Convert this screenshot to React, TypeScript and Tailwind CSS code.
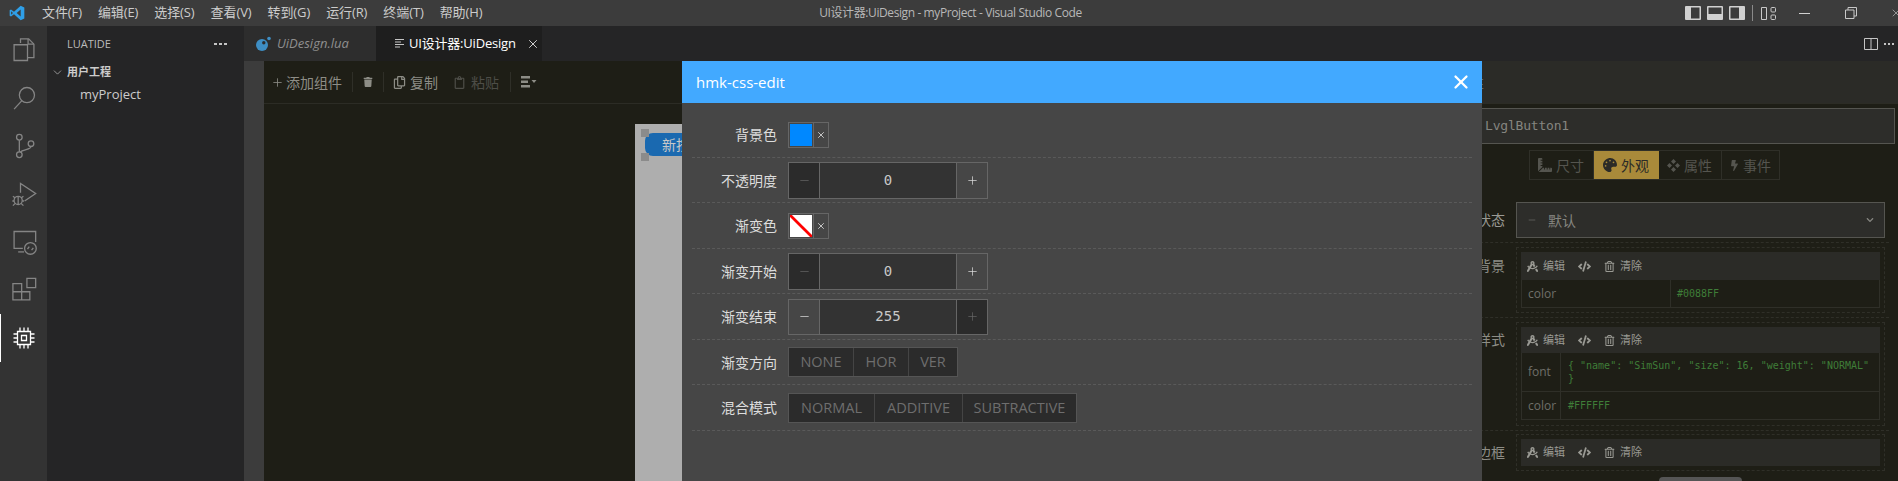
import React from "react";
import { FaDraftingCompass, FaCode, FaRegTrashAlt, FaPalette, FaRulerCombined, FaBolt, FaTrash, FaRegCopy, FaRegClipboard, FaChevronDown } from "react-icons/fa";
import { X, Plus, Minus, ChevronDown } from "lucide-react";

const Ico = ({ d, children }: { d?: string; children?: React.ReactNode }) => (
  <svg width="28" height="28" viewBox="0 0 24 24" fill="none" stroke="#858585" strokeWidth="1.1">
    {d ? <path d={d} /> : null}
    {children}
  </svg>
);

function ActivityBar() {
  return (
    <div className="flex h-full w-[47px] shrink-0 flex-col bg-[#333333]">
      <div className="flex h-12 items-center justify-center">
        <Ico><path d="M9 6V2.5h7l4.5 4.5v11.5H15" /><path d="M15.5 2.5V7h5" /><path d="M3.5 7.5H15v13.5H3.5z" /></Ico>
      </div>
      <div className="flex h-12 items-center justify-center">
        <Ico><circle cx="14.5" cy="9.5" r="6.5" /><path d="M10 14.5 3.5 21.5" /></Ico>
      </div>
      <div className="flex h-12 items-center justify-center">
        <Ico><circle cx="8" cy="4.5" r="2.4" /><circle cx="8" cy="19.5" r="2.4" /><circle cx="18" cy="10" r="2.4" /><path d="M8 7v10M18 12.5c0 3-7 2-9.5 5" /></Ico>
      </div>
      <div className="flex h-12 items-center justify-center">
        <Ico><path d="M9 11V3l13 8.5-9.5 6.5" /><circle cx="7" cy="17.5" r="3.5" /><path d="M7 14v7M2.5 14l2 1.5M11.5 14l-2 1.5M2 18h1.5M10.500 18H12M2.500 22l2-2M11.500 22l-2-2" /></Ico>
      </div>
      <div className="flex h-12 items-center justify-center">
        <Ico><path d="M11 17.500H3.500V3H22v9" /><path d="M7 20.500h5" /><circle cx="17.500" cy="17.500" r="5" /><path d="m15 18 1.500-2M18.500 19l1.500-2" /></Ico>
      </div>
      <div className="flex h-12 items-center justify-center">
        <Ico><path d="M2.500 6.500h7.500v14H2.500zM2.500 13.500H17v7h-7" /><path d="M14.500 2H22v8h-7.500z" /></Ico>
      </div>
      <div className="relative flex h-12 items-center justify-center">
        <div className="absolute left-0 top-0 h-12 w-px bg-white" />
        <svg width="24" height="24" viewBox="0 0 24 24" fill="none" stroke="#ffffff" strokeWidth="1.3">
          <path d="M5.500 5.500h13v13h-13z" />
          <path d="M9.500 9.500h5v5h-5z" />
          <path d="M8 1.500v4M12 1.500v4M16 1.500v4M8 18.500v4M12 18.500v4M16 18.500v4M1.500 8h4M1.500 12h4M1.500 16h4M18.500 8h4M18.500 12h4M18.500 16h4" />
        </svg>
      </div>
    </div>
  );
}

function Sidebar() {
  return (
    <div className="h-full w-[197px] shrink-0 bg-[#252526] text-[#cccccc]">
      <div className="flex h-[35px] items-center justify-between pl-5 pr-[17px] text-[11px] leading-none text-[#bbbbbb]">
        <span>LUATIDE</span>
        <span className="flex gap-[2px]">
          <i className="h-[2px] w-[3px] bg-[#c5c5c5]" />
          <i className="h-[2px] w-[3px] bg-[#c5c5c5]" />
          <i className="h-[2px] w-[3px] bg-[#c5c5c5]" />
        </span>
      </div>
      <div className="flex h-[22px] items-center pl-[4px] text-[11px] font-bold">
        <ChevronDown size={13} strokeWidth={1.2} className="mr-[3px]" />
        <span>用户工程</span>
      </div>
      <div className="flex h-[24px] items-center pl-[33px] text-[13px]">myProject</div>
    </div>
  );
}

function Tabs() {
  return (
    <div className="flex h-[35px] shrink-0 items-stretch bg-[#252526]">
      <div className="flex w-[132px] items-center bg-[#2d2d2d] pl-[11px] text-[13px] italic text-[#8f8f8f]">
        <svg width="16" height="16" viewBox="0 0 16 16" className="mr-[6px] shrink-0">
          <circle cx="7" cy="9" r="6" fill="#3e8ec4" />
          <circle cx="8.800" cy="6.800" r="1.700" fill="#2d2d2d" />
          <circle cx="14" cy="2.500" r="1.800" fill="#3e8ec4" />
        </svg>
        UiDesign.lua
      </div>
      <div className="flex w-[166px] items-center bg-[#1e1e1e] pl-[18px] text-[13px] tracking-[-0.2px] text-white">
        <svg width="11" height="11" viewBox="0 0 11 11" fill="none" stroke="#c5c5c5" strokeWidth="1.200" className="mr-[4px] shrink-0">
          <path d="M1 1.500h9M1 4h6M1 6.500h9M1 9h5" />
        </svg>
        <span className="whitespace-nowrap">UI设计器:UiDesign</span>
        <X size={14} strokeWidth={1.500} className="ml-[10px] shrink-0 text-[#e8e8e8]" />
      </div>
      <div className="flex flex-1 items-center justify-end">
        <svg width="14" height="14" viewBox="0 0 14 14" fill="none" stroke="#c5c5c5" strokeWidth="1" className="mr-[6px]">
          <path d="M.5 1.500h13v11H.5zM7 1.500v11" />
        </svg>
        <span className="flex w-[14px] gap-[2px]">
          <i className="h-[2px] w-[2px] shrink-0 bg-[#c5c5c5]" />
          <i className="h-[2px] w-[2px] shrink-0 bg-[#c5c5c5]" />
          <i className="h-[2px] w-[2px] shrink-0 bg-[#c5c5c5]" />
        </span>
      </div>
    </div>
  );
}

function Toolbar() {
  return (
    <div className="flex h-[43px] shrink-0 items-center border-b border-[#2c2c25] bg-[#1e1e16] pl-[7px] text-[14px] text-[#8d8d86]">
      <Plus size={13} strokeWidth={1.500} className="mr-[2px]" />
      <span className="mr-[10px] whitespace-nowrap">添加组件</span>
      <i className="h-5 w-px bg-[#2f2f28]" />
      <FaTrash size={10} className="mx-[10px] text-[#8d8d86]" />
      <i className="h-5 w-px bg-[#2f2f28]" />
      <FaRegCopy size={13} className="ml-[9px] mr-[4px]" />
      <span className="mr-[15px] whitespace-nowrap">复制</span>
      <FaRegClipboard size={13} className="mr-[5px] text-[#4d4d47]" />
      <span className="mr-[11px] whitespace-nowrap text-[#4d4d47]">粘贴</span>
      <i className="h-5 w-px bg-[#2f2f28]" />
      <svg width="16" height="14" viewBox="0 0 16 14" fill="#8d8d86" className="ml-[10px]">
        <path d="M0 1h9v2.500H0zM0 5.500h7V8H0zM0 10h9v2.500H0zM10.500 5h5L13 8z" />
      </svg>
    </div>
  );
}

function Canvas() {
  return (
    <div className="flex min-w-0 flex-1 flex-col bg-[#1e1e16]">
      <Toolbar />
      <div className="flex flex-1 pl-[371px] pt-[20px]">
        <div className="h-full w-[320px] bg-[#aeaeae] pl-[10px] pt-[9px]">
          <div className="relative flex h-[23px] w-[80px] items-center rounded-l-[8px] bg-[#1a69b0] pl-[17px] text-[14px] text-[#c8c8c8]">
            <i className="absolute -left-[4px] -top-[4px] h-2 w-2 bg-[#8b8b8b]" />
            <i className="absolute -left-[4px] -bottom-[5px] h-2 w-2 bg-[#8b8b8b]" />
            新按钮
          </div>
        </div>
      </div>
    </div>
  );
}

function StyleGroup({ label, children, headerClass }: { label: string; children?: React.ReactNode; headerClass: string }) {
  return (
    <div className="flex">
      <div className={`w-[95px] shrink-0 text-right text-[14px] leading-[26px] text-[#8d8d86] ${headerClass === "h-[26px]" ? "pt-[5px]" : "pt-[6px]"}`}>{label}</div>
      <div className="ml-[11px] w-[369px] border border-dashed border-[#2f2f28] p-[4px]">
        <div className={`flex items-center bg-[#2b2b27] pl-[6px] text-[11px] text-[#9a9a94] ${headerClass}`}>
          <FaDraftingCompass size={11} className="mr-[5px]" />
          <span className="mr-[13px] whitespace-nowrap">编辑</span>
          <FaCode size={13} className="mr-[13px]" />
          <FaRegTrashAlt size={11} className="mr-[5px]" />
          <span className="whitespace-nowrap">清除</span>
        </div>
        {children}
      </div>
    </div>
  );
}

function RightPanel() {
  return (
    <div className="h-full w-[488px] shrink-0 bg-[#1e1e16] text-[#8d8d86]">
      <div className="flex h-[43px] items-center border-b border-[#2c2c25] bg-[#2b2b27] pl-[46px] text-[14px] text-[#6f6f69]">属性</div>
      <div className="ml-[4px] mr-[3px] mt-[4px] flex h-[36px] items-center border border-[#555550] bg-[#2d2d2a] pl-[70px] font-['DejaVu_Sans_Mono',monospace] text-[13px] tracking-[-0.2px] text-[#858580]">
        LvglButton1
      </div>
      <div className="mt-[6px] flex justify-center">
        <div className="flex h-[30px] border border-[#2f2f28] text-[14px] text-[#55554f]">
          <div className="flex w-[64px] items-center justify-center gap-[4px] border-r border-[#2f2f28]"><FaRulerCombined size={14} />尺寸</div>
          <div className="flex w-[65px] items-center justify-center gap-[4px] bg-[#a98a3a] text-[#2b2b27]"><FaPalette size={14} />外观</div>
          <div className="flex w-[63px] items-center justify-center gap-[4px] border-r border-[#2f2f28]">
            <svg width="13" height="13" viewBox="0 0 13 13" fill="#55554f"><path d="M6.500 0 9 2.500 6.500 5 4 2.500zM2.500 4 5 6.500 2.500 9 0 6.500zM10.500 4 13 6.500 10.500 9 8 6.500zM6.500 8 9 10.500 6.500 13 4 10.500z" /></svg>
            属性
          </div>
          <div className="flex w-[57px] items-center justify-center gap-[3px]"><FaBolt size={11} />事件</div>
        </div>
      </div>
      <div className="mr-[9px] mt-[22px] flex border-b border-dashed border-[#2f2f28] pb-[4px]">
        <div className="w-[95px] shrink-0 text-right text-[14px] leading-[36px] text-[#9a9a94]">状态</div>
        <div className="ml-[11px] flex h-[36px] w-[369px] items-center border border-[#555550] bg-[#2d2d2a] pl-[10px] pr-[10px] text-[14px] text-[#858580]">
          <Minus size={10} strokeWidth={1.200} className="mr-[11px]" />
          <span className="flex-1">默认</span>
          <FaChevronDown size={8} />
        </div>
      </div>
      <div className="mr-[9px] border-b border-dashed border-[#2f2f28] pb-[4px] pt-[4px]">
        <StyleGroup label="背景" headerClass="h-[28px]">
          <div className="flex h-[28px] items-center border border-t-0 border-[#2f2f28] text-[12px]">
            <div className="flex h-full w-[149px] items-center border-r border-[#2f2f28] pl-[6px] text-[#6f6f69]">color</div>
            <div className="pl-[6px] font-['DejaVu_Sans_Mono',monospace] text-[10px] text-[#3f7d38]">#0088FF</div>
          </div>
        </StyleGroup>
      </div>
      <div className="mr-[9px] border-b border-dashed border-[#2f2f28] pb-[4px] pt-[4px]">
        <StyleGroup label="样式" headerClass="h-[26px]">
          <div className="flex h-[39px] border border-t-0 border-[#2f2f28] text-[12px]">
            <div className="flex h-full w-[39px] shrink-0 items-center border-r border-[#2f2f28] pl-[6px] text-[#6f6f69]">font</div>
            <div className="flex items-center pl-[7px] pr-[8px] font-['DejaVu_Sans_Mono',monospace] text-[10px] leading-[13px] text-[#3f7d38]">{'{ "name": "SimSun", "size": 16, "weight": "NORMAL" }'}</div>
          </div>
          <div className="mb-px flex h-[28px] border border-t-0 border-[#2f2f28] text-[12px]">
            <div className="flex h-full w-[39px] shrink-0 items-center border-r border-[#2f2f28] pl-[6px] text-[#6f6f69]">color</div>
            <div className="flex items-center pl-[7px] font-['DejaVu_Sans_Mono',monospace] text-[10px] text-[#3f7d38]">#FFFFFF</div>
          </div>
        </StyleGroup>
      </div>
      <div className="mr-[9px] pt-[3px]">
        <StyleGroup label="边框" headerClass="h-[27px]" />
      </div>
    </div>
  );
}

function ColorPick({ none }: { none?: boolean }) {
  return (
    <div className="flex h-[26px] w-[41px] border border-[#666666]">
      <div className="h-full w-[25px] border-r border-[#666666] p-px">
        {none ? (
          <svg viewBox="0 0 24 24" preserveAspectRatio="none" className="block h-full w-full bg-white">
            <path d="M0 0 24 24" stroke="#ff0000" strokeWidth="3" />
          </svg>
        ) : (
          <div className="h-full w-full bg-[#0088ff]" />
        )}
      </div>
      <div className="flex flex-1 items-center justify-center">
        <X size={10} strokeWidth={2} className="text-[#dddddd]" />
      </div>
    </div>
  );
}

function NumberBox({ value, minDisabled, maxDisabled, tall }: { value: string; minDisabled?: boolean; maxDisabled?: boolean; tall?: boolean }) {
  return (
    <div className={`flex w-[200px] border border-[#666666] ${tall ? "h-[37px]" : "h-[36px]"}`}>
      <div className={`flex w-[31px] items-center justify-center border-r border-[#666666] ${minDisabled ? "bg-[#2b2b2b] text-[#666666]" : "bg-[#464646] text-[#e0e0e0]"}`}>
        <Minus size={13} strokeWidth={1.300} />
      </div>
      <div className="flex flex-1 items-center justify-center bg-[#333333] font-['DejaVu_Sans_Mono',monospace] text-[14px] text-[#c8c8c8]">{value}</div>
      <div className={`flex w-[31px] items-center justify-center border-l border-[#666666] ${maxDisabled ? "bg-[#2b2b2b] text-[#666666]" : "bg-[#464646] text-[#e0e0e0]"}`}>
        <Plus size={13} strokeWidth={1.300} />
      </div>
    </div>
  );
}

function BtnGroup({ items }: { items: { t: string; w: string }[] }) {
  return (
    <div className="flex h-[30px] border border-[#555555] bg-[#2b2b2b] text-[14.5px] text-[#6e6e6e]">
      {items.map((it, i) => (
        <div key={it.t} className={`flex items-center justify-center ${it.w} ${i ? "border-l border-[#444444]" : ""}`}>{it.t}</div>
      ))}
    </div>
  );
}

function Row({ label, children }: { label: string; children: React.ReactNode }) {
  return (
    <div className="flex h-[45.5px] items-center border-b border-dashed border-[#5a5a5a] pt-px">
      <div className="mr-[11px] w-[85px] shrink-0 text-right text-[14px] text-[#dddddd]">{label}</div>
      {children}
    </div>
  );
}

function Modal() {
  return (
    <div className="absolute bottom-0 left-[682px] top-[61px] flex w-[800px] flex-col bg-[#464646]">
      <div className="flex h-[42px] shrink-0 items-center justify-between bg-[#42a9ff] pl-[14px] pr-[10px] text-[15px] text-white">
        <span>hmk-css-edit</span>
        <X size={22} strokeWidth={2.500} />
      </div>
      <div className="pl-[10px] pr-[10px] pt-[9px]">
        <Row label="背景色"><ColorPick /></Row>
        <Row label="不透明度"><NumberBox value="0" minDisabled tall /></Row>
        <Row label="渐变色"><ColorPick none /></Row>
        <Row label="渐变开始"><NumberBox value="0" minDisabled tall /></Row>
        <Row label="渐变结束"><NumberBox value="255" maxDisabled /></Row>
        <Row label="渐变方向">
          <BtnGroup items={[{ t: "NONE", w: "w-[64px]" }, { t: "HOR", w: "w-[55px]" }, { t: "VER", w: "w-[49px]" }]} />
        </Row>
        <Row label="混合模式">
          <BtnGroup items={[{ t: "NORMAL", w: "w-[85px]" }, { t: "ADDITIVE", w: "w-[88px]" }, { t: "SUBTRACTIVE", w: "w-[114px]" }]} />
        </Row>
      </div>
    </div>
  );
}

function TitleBar() {
  const menus = ["文件(F)", "编辑(E)", "选择(S)", "查看(V)", "转到(G)", "运行(R)", "终端(T)", "帮助(H)"];
  return (
    <div className="grid h-[26px] shrink-0 grid-cols-[1fr_auto_1fr] items-center bg-[#3c3c3c] text-[12px] text-[#cccccc]">
      <div className="flex items-center pl-[9px] text-[13px] tracking-[-0.1px]">
        <svg width="16" height="16" viewBox="0 0 24 24" className="mr-[9px] shrink-0">
          <path d="M17.500 1 23 3.600v16.800L17.500 23 7.500 13.800 3 17.200 1 16V8l2-1.200 4.500 3.400z M17.500 6.800 11.500 12l6 5.200z M3.200 9.300v5.400L6 12z" fill="#2f9fe8" fillRule="evenodd" />
        </svg>
        {menus.map((m) => (
          <span key={m} className="whitespace-nowrap px-2">{m}</span>
        ))}
      </div>
      <div className="whitespace-nowrap pl-[3px] tracking-[-0.4px] text-[#b8b8b8]">UI设计器:UiDesign - myProject - Visual Studio Code</div>
      <div className="flex items-center justify-end overflow-hidden">
        <svg width="16" height="14" viewBox="0 0 16 14" className="mr-[6px]"><path d="M1 0h14a1 1 0 0 1 1 1v12a1 1 0 0 1-1 1H1a1 1 0 0 1-1-1V1a1 1 0 0 1 1-1z" fill="#d0d0d0" /><path d="M6 1.500h8.500v11H6z" fill="#3c3c3c" /></svg>
        <svg width="16" height="14" viewBox="0 0 16 14" className="mr-[6px]"><path d="M1 0h14a1 1 0 0 1 1 1v12a1 1 0 0 1-1 1H1a1 1 0 0 1-1-1V1a1 1 0 0 1 1-1z" fill="#d0d0d0" /><path d="M1.500 1.500h13V8h-13z" fill="#3c3c3c" /></svg>
        <svg width="16" height="14" viewBox="0 0 16 14" className="mr-[7px]"><path d="M1 0h14a1 1 0 0 1 1 1v12a1 1 0 0 1-1 1H1a1 1 0 0 1-1-1V1a1 1 0 0 1 1-1z" fill="#d0d0d0" /><path d="M1.500 1.500H10v11H1.500z" fill="#3c3c3c" /></svg>
        <i className="mr-[8px] h-4 w-px bg-[#8a8a8a]" />
        <svg width="15" height="13" viewBox="0 0 15 13" fill="none" stroke="#c8c8c8" strokeWidth="1" className="mr-[23px]">
          <path d="M.5.500h5v12h-5z" /><rect x="10" y=".5" width="4.500" height="4.500" rx="1" /><rect x="10" y="8" width="4.500" height="4.500" rx="1" />
        </svg>
        <i className="mr-[35px] h-px w-[11px] bg-[#d0d0d0]" />
        <svg width="12" height="12" viewBox="0 0 12 12" fill="none" stroke="#c8c8c8" strokeWidth="1" className="mr-[33px]">
          <path d="M.5 3h8.500v8.500H.5zM3 3V.5h8.500V9H9" />
        </svg>
        <div className="w-[8px] shrink-0 overflow-hidden">
          <X size={12} strokeWidth={1.200} className="text-[#d0d0d0]" />
        </div>
      </div>
    </div>
  );
}

export default function App() {
  return (
    <div className="relative flex h-[481px] w-[1898px] flex-col overflow-hidden bg-[#1e1e16] font-['Open_Sans','Noto_Sans_CJK_SC',sans-serif]">
      <TitleBar />
      <div className="flex min-h-0 flex-1">
        <ActivityBar />
        <Sidebar />
        <div className="flex min-w-0 flex-1 flex-col">
          <Tabs />
          <div className="flex min-h-0 flex-1">
            <div className="w-[20px] shrink-0 bg-[#3c3c3c]" />
            <Canvas />
            <RightPanel />
          </div>
        </div>
      </div>
      <Modal />
      <div className="absolute bottom-0 left-[1659px] h-[4px] w-[83px] rounded-t-[4px] bg-[#555555]" />
    </div>
  );
}
